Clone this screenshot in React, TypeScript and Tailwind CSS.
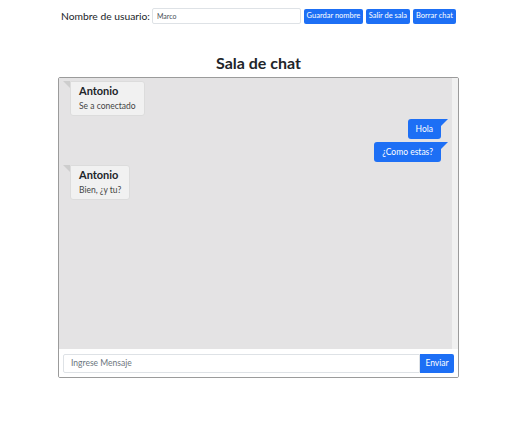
import React from "react";

type Msg = { mine: boolean; user?: string; text: string };

const messages: Msg[] = [
  { mine: false, user: "Antonio", text: "Se a conectado" },
  { mine: true, text: "Hola" },
  { mine: true, text: "¿Como estas?" },
  { mine: false, user: "Antonio", text: "Bien, ¿y tu?" },
];

function Corner({ side }: { side: "left" | "right" }) {
  return (
    <svg width="7" height="7" viewBox="0 0 7 7" className="shrink-0">
      {side === "left" ? (
        <polygon points="0,0 7,0 7,7" fill="#cdcdcd" />
      ) : (
        <polygon points="0,0 7,0 0,7" fill="#1d6ff5" />
      )}
    </svg>
  );
}

export default function App() {
  return (
    <div
      className="w-[524px] h-[430px] bg-white text-[#212529]"
      style={{ fontFamily: 'Lato, "Open Sans", sans-serif' }}
    >
      {/* barra de usuario */}
      <div className="ml-[58px] w-[401px] pt-[8px] pl-[3px] flex items-center">
        <label className="text-[10.3px] leading-none mr-[2px] whitespace-nowrap">Nombre de usuario:</label>
        <input
          defaultValue="Marco"
          className="w-[149px] h-[16px] border border-[#dee2e6] rounded-[2px] px-[4px] text-[7px] text-[#495057] outline-none"
        />
        <div className="flex gap-[3px] ml-[3px]">
          <button className="h-[15px] w-[59px] bg-[#1d6ff5] text-white text-[7.5px] rounded-[2px] whitespace-nowrap">Guardar nombre</button>
          <button className="h-[15px] w-[44px] bg-[#1d6ff5] text-white text-[7.5px] rounded-[2px] whitespace-nowrap">Salir de sala</button>
          <button className="h-[15px] w-[43px] bg-[#1d6ff5] text-white text-[7.5px] rounded-[2px] whitespace-nowrap">Borrar chat</button>
        </div>
      </div>

      <h2 className="text-center w-[401px] ml-[58px] mt-[29px] text-[16px] leading-[20px] font-bold">Sala de chat</h2>

      {/* caja de chat */}
      <div className="ml-[58px] mt-[4px] w-[401px] h-[301px] border border-[#9b9b9b] rounded-[2px] flex flex-col overflow-hidden">
        <div className="flex h-[271px] bg-[#e4e3e4]">
          <div className="flex-1 pt-[3px] pl-[4px] pr-[4px] flex flex-col gap-[3px]">
            {messages.map((m, i) =>
              m.mine ? (
                <div key={i} className="flex justify-end items-start">
                  <div className="bg-[#1d6ff5] text-white text-[8.5px] h-[20px] px-[8px] flex items-center rounded-l-[3px] rounded-br-[3px]">
                    {m.text}
                  </div>
                  <Corner side="right" />
                </div>
              ) : (
                <div key={i} className="flex items-start">
                  <Corner side="left" />
                  <div className="bg-[#f1f1f1] border border-[#dcdcdc] rounded-r-[3px] rounded-bl-[3px] h-[35px] pl-[8px] pr-[8px] pt-[2px]">
                    <div className="text-[11px] font-bold leading-[14px]">{m.user}</div>
                    <div className="text-[8.5px] leading-[14px] mt-[1px] text-[#444]">{m.text}</div>
                  </div>
                </div>
              )
            )}
          </div>
          <div className="w-[6px] bg-[#f1f1f1]" />
        </div>
        <div className="flex-1 bg-white flex items-center px-[4px]">
          <input
            placeholder="Ingrese Mensaje"
            className="flex-1 h-[19px] border border-[#dee2e6] rounded-l-[2px] px-[7px] text-[8.5px] placeholder:text-[#6c757d] outline-none"
          />
          <button className="h-[19px] w-[34px] bg-[#1d6ff5] text-white text-[8.5px] rounded-r-[2px]">Enviar</button>
        </div>
      </div>
    </div>
  );
}
